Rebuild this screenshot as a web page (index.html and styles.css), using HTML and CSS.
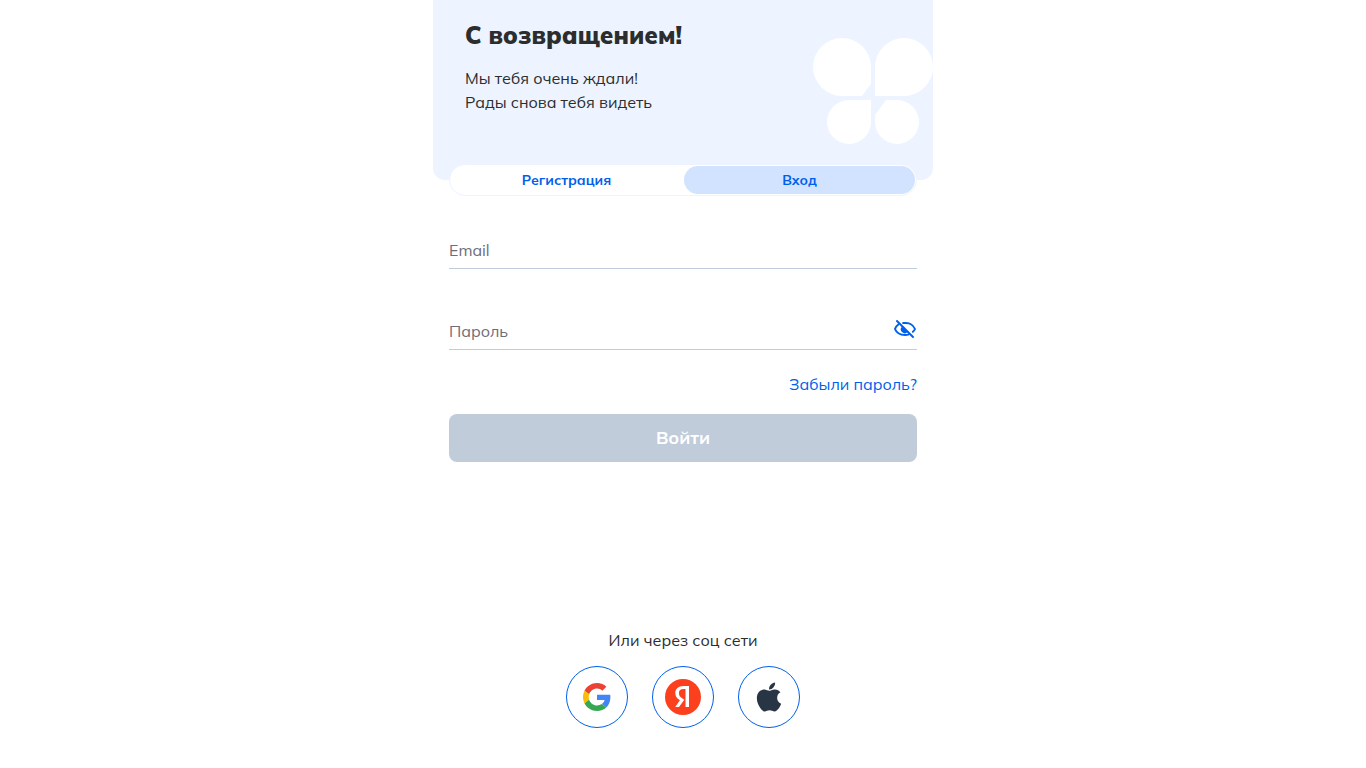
FILE: index.html
```html
<!DOCTYPE html>
<html lang="ru">
<head>
<meta charset="utf-8">
<meta name="viewport" content="width=device-width, initial-scale=1">
<title>Вход</title>
<link rel="stylesheet" href="styles.css">
</head>
<body>
<main class="auth">
  <header class="hero">
    <div class="hero-text">
      <h1 class="hero-title">С возвращением!</h1>
      <p class="hero-lead">Мы тебя очень ждали!<br>Рады снова тебя видеть</p>
    </div>
    <svg class="hero-logo" viewBox="0 0 120 106" aria-hidden="true">
      <path d="M29 0A29 29 0 0 1 58 29V46L49 58H29A29 29 0 0 1 29 0Z"/>
      <path d="M62 58V29A29 29 0 1 1 91 58Z"/>
      <path d="M36 62H58V84A22 22 0 1 1 36 62Z"/>
      <path d="M73 62H84A22 22 0 1 1 62 84V77Z"/>
    </svg>
  </header>

  <div class="content">
    <nav class="tabs" aria-label="Вход или регистрация">
      <button class="tab" type="button">Регистрация</button>
      <button class="tab tab-active" type="button" aria-current="page">Вход</button>
    </nav>

    <form class="form">
      <div class="field">
        <input class="input" id="email" type="email" placeholder="Email" aria-label="Email">
      </div>
      <div class="field">
        <input class="input" id="password" type="password" placeholder="Пароль" aria-label="Пароль">
        <button class="eye" type="button" aria-label="Показать пароль">
          <svg viewBox="0 0 24 24" width="24" height="24" aria-hidden="true">
            <g fill="none" stroke="currentColor" stroke-width="2" stroke-linecap="round" stroke-linejoin="round">
              <path d="M5.600 7.200C3.500 8.700 2.300 10.700 2 12C3.500 15.800 7.500 18 12 18C13.400 18 14.700 17.800 15.800 17.300"/>
              <path d="M10.200 6.100C15.600 5.300 20.300 7.700 22 12C21.600 13 20.900 13.900 19.900 14.800"/>
              <path d="M4 4L20 20"/>
            </g>
            <path d="M9 9.500L14.600 15A3.600 3.600 0 1 1 9 9.500Z" fill="currentColor"/>
          </svg>
        </button>
      </div>
      <a class="forgot" href="#">Забыли пароль?</a>
      <button class="submit" type="submit" disabled>Войти</button>
    </form>

    <section class="social">
      <p class="social-title">Или через соц сети</p>
      <div class="social-list">
        <a class="social-link" href="#" aria-label="Google">
          <svg viewBox="0 0 48 48" width="28" height="28" aria-hidden="true">
            <path fill="#ea4335" d="M24 9.500c3.540 0 6.710 1.220 9.210 3.600l6.850-6.850C35.900 2.380 30.470 0 24 0 14.620 0 6.510 5.380 2.560 13.220l7.980 6.190C12.430 13.720 17.740 9.500 24 9.500z"/>
            <path fill="#4285f4" d="M46.980 24.550c0-1.570-.15-3.090-.38-4.550H24v9.020h12.940c-.58 2.960-2.260 5.480-4.780 7.180l7.730 6c4.510-4.180 7.090-10.360 7.090-17.650z"/>
            <path fill="#fbbc05" d="M10.530 28.590c-.48-1.450-.76-2.990-.76-4.590s.27-3.140.76-4.590l-7.980-6.190C.92 16.460 0 20.120 0 24c0 3.880.92 7.540 2.560 10.780z"/>
            <path fill="#34a853" d="M24 48c6.480 0 11.930-2.130 15.890-5.810l-7.730-6c-2.150 1.450-4.920 2.300-8.160 2.300-6.260 0-11.570-4.220-13.470-9.910l-7.980 6.190C6.510 42.620 14.620 48 24 48z"/>
          </svg>
        </a>
        <a class="social-link" href="#" aria-label="Яндекс">
          <svg viewBox="0 0 36 36" width="36" height="36" aria-hidden="true">
            <circle cx="18" cy="18" r="18" fill="#fc3f1d"/>
            <path fill="#fff" fill-rule="evenodd" d="M24 28H20.500V10H18.600C15.500 10 13.900 11.500 13.900 13.900C13.900 16.600 15.100 17.800 17.400 19.400L19.300 20.700L14 28H10.200L14.900 21.300C12 19.300 10.300 17.400 10.300 14C10.300 9.900 13.100 7 18.600 7H24Z"/>
          </svg>
        </a>
        <a class="social-link" href="#" aria-label="Apple">
          <svg viewBox="-8 8 400 496" width="26" height="32" aria-hidden="true">
            <path fill="#283544" d="M318.700 268.700c-.2-36.700 16.400-64.400 50-84.800-18.800-26.900-47.200-41.700-84.700-44.600-35.500-2.800-74.300 20.700-88.500 20.700-15 0-49.400-19.700-76.400-19.700C63.300 141.200 4 184.800 4 273.500q0 39.300 14.400 81.200c12.800 36.700 59 126.700 107.200 125.200 25.200-.6 43-17.900 75.800-17.900 31.800 0 48.300 17.900 76.400 17.900 48.600-.7 90.400-82.500 102.600-119.300-65.200-30.700-61.700-90-61.700-91.900zm-56.600-164.200c27.300-32.400 24.800-61.900 24-72.500-24.100 1.400-52 16.400-67.900 34.900-17.500 19.800-27.800 44.300-25.600 71.900 26.100 2 49.900-11.400 69.500-34.300z"/>
          </svg>
        </a>
      </div>
    </section>
  </div>
</main>
</body>
</html>
```

FILE: styles.css
```css
* {
  box-sizing: border-box;
}

body {
  margin: 0;
  background: #fff;
  color: #2c2d2e;
  font: 16px/24px Mulish, Muli, "Noto Sans", sans-serif;
}

h1,
p {
  margin: 0;
}

button,
input {
  font: inherit;
}

.auth {
  max-width: 500px;
  margin: 0 auto;
}

.hero {
  display: flex;
  justify-content: space-between;
  align-items: flex-start;
  min-height: 180px;
  padding: 20px 0 36px 32px;
  border-radius: 0 0 12px 12px;
  background: #edf4ff;
}

.hero-title {
  margin-bottom: 16px;
  font-size: 24px;
  font-weight: 900;
  line-height: 30px;
}

.hero-logo {
  flex: none;
  width: 120px;
  height: 106px;
  margin-top: 18px;
  fill: #fff;
}

.content {
  padding: 0 16px 40px;
}

.tabs {
  display: flex;
  gap: 2px;
  margin-top: -16px;
  padding: 1px;
  border: 1px solid #edf4ff;
  border-radius: 16px;
  background: #fff;
}

.tab {
  flex: 1;
  height: 28px;
  padding: 0;
  border: 0;
  border-radius: 14px;
  background: none;
  color: #005fec;
  font-size: 14px;
  font-weight: 700;
  cursor: pointer;
}

.tab-active {
  background: #d2e3ff;
}

.form {
  display: flex;
  flex-direction: column;
  padding-top: 36px;
}

.field {
  display: flex;
  align-items: flex-start;
  height: 37px;
  margin-bottom: 44px;
  border-bottom: 1px solid #c1ccda;
}

.field + .field {
  margin-bottom: 22px;
}

.input {
  flex: 1;
  min-width: 0;
  height: 36px;
  padding: 0;
  border: 0;
  outline: 0;
  background: none;
  color: #2c2d2e;
}

.input::placeholder {
  color: #6d6e78;
  opacity: 1;
}

.eye {
  width: 24px;
  height: 24px;
  margin-top: 4px;
  padding: 0;
  border: 0;
  background: none;
  color: #005fec;
  cursor: pointer;
}

.eye svg {
  display: block;
}

.forgot {
  align-self: flex-end;
  margin-bottom: 18px;
  color: #005fec;
  text-decoration: none;
}

.submit {
  height: 48px;
  border: 0;
  border-radius: 8px;
  background: #c1ccda;
  color: #fff;
  font-size: 18px;
  font-weight: 700;
}

.social {
  margin-top: 166px;
  text-align: center;
}

.social-title {
  margin-bottom: 14px;
}

.social-list {
  display: flex;
  justify-content: center;
  gap: 24px;
}

.social-link {
  display: flex;
  align-items: center;
  justify-content: center;
  width: 62px;
  height: 62px;
  border: 1px solid #005fec;
  border-radius: 50%;
}
```
